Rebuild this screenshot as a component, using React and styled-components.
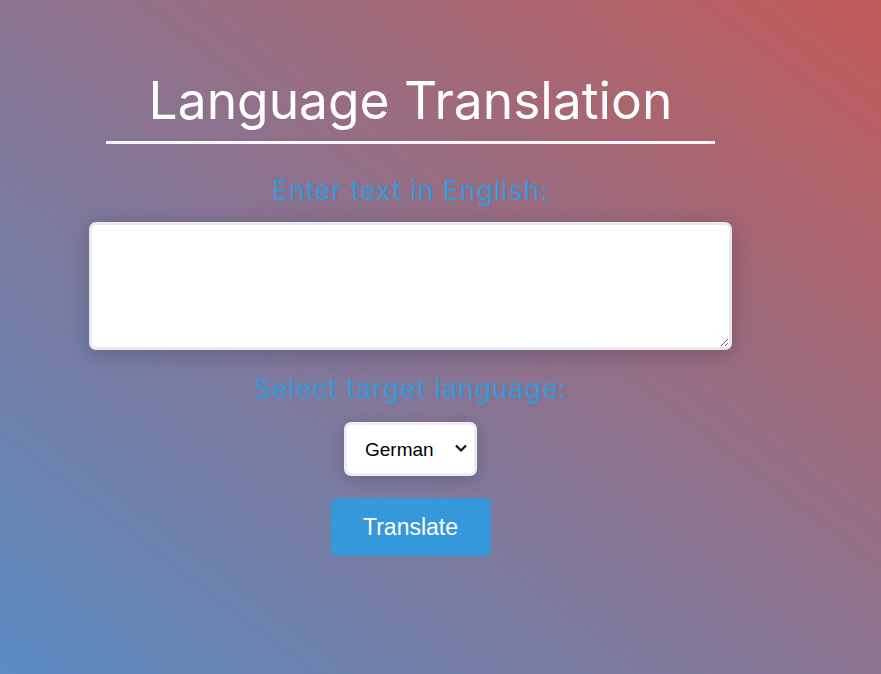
import styled, { createGlobalStyle } from "styled-components";

const GlobalStyle = createGlobalStyle`
  html, body {
    margin: 0;
    padding: 0;
  }
  body {
    min-height: 100vh;
    background: linear-gradient(to top right, #5b8cc3, #8a7390 50%, #c25b58);
    font-family: Inter, "Noto Sans", sans-serif;
  }
`;

const Page = styled.div`
  width: 881px;
  height: 674px;
  overflow: hidden;
`;

const Container = styled.div`
  width: 643px;
  margin-left: 89px;
  padding-top: 70px;
  display: flex;
  flex-direction: column;
  align-items: center;
`;

const Title = styled.h1`
  margin: 0;
  width: 609px;
  padding-bottom: 11px;
  border-bottom: 3px solid #f4f4f6;
  color: #ffffff;
  font-family: Inter, sans-serif;
  font-weight: 400;
  font-size: 51.5px;
  line-height: 60px;
  text-align: center;
`;

const Label = styled.label`
  display: block;
  color: #3498db;
  font-family: Inter, sans-serif;
  font-size: 27px;
  letter-spacing: 0.8px;
  line-height: 30px;
  margin-top: ${(p) => p.$top}px;
  text-align: center;
`;

const TextArea = styled.textarea`
  box-sizing: border-box;
  width: 643px;
  height: 128px;
  margin-top: 16px;
  border: 3px solid #e8ebee;
  border-radius: 7px;
  background: #ffffff;
  box-shadow: 0 4px 22px rgba(40, 30, 60, 0.28);
  outline: none;
  padding: 10px;
  font-size: 16px;
`;

const SelectWrap = styled.div`
  position: relative;
  margin-top: 18px;
`;

const Select = styled.select`
  display: block;
  box-sizing: border-box;
  width: 133px;
  height: 54px;
  border: 3px solid #eceef1;
  border-radius: 7px;
  background: #ffffff;
  box-shadow: 0 4px 16px rgba(40, 30, 60, 0.22);
  appearance: none;
  font-family: "Liberation Sans", Arial, sans-serif;
  font-size: 19px;
  color: #000000;
  padding: 0 30px 0 18px;
  outline: none;
`;

const Chevron = styled.svg`
  position: absolute;
  right: 9px;
  top: 21px;
  width: 14px;
  height: 10px;
  pointer-events: none;
`;

const Button = styled.button`
  width: 160px;
  height: 58px;
  margin-top: 22px;
  border: none;
  border-radius: 6px;
  background: #3498db;
  color: #ffffff;
  font-family: "Liberation Sans", Arial, sans-serif;
  font-size: 23px;
  cursor: pointer;
`;

export default function App() {
  return (
    <Page>
      <GlobalStyle />
      <Container>
        <Title>Language Translation</Title>
        <Label $top={32} htmlFor="source">Enter text in English:</Label>
        <TextArea id="source" />
        <Label $top={24} htmlFor="target">Select target language:</Label>
        <SelectWrap>
          <Select id="target" defaultValue="de">
            <option value="fr">French</option>
            <option value="de">German</option>
            <option value="es">Spanish</option>
          </Select>
          <Chevron viewBox="0 0 14 10">
            <path d="M2 2.5 L7 7.5 L12 2.5" fill="none" stroke="#111" strokeWidth="2.2" />
          </Chevron>
        </SelectWrap>
        <Button>Translate</Button>
      </Container>
    </Page>
  );
}
